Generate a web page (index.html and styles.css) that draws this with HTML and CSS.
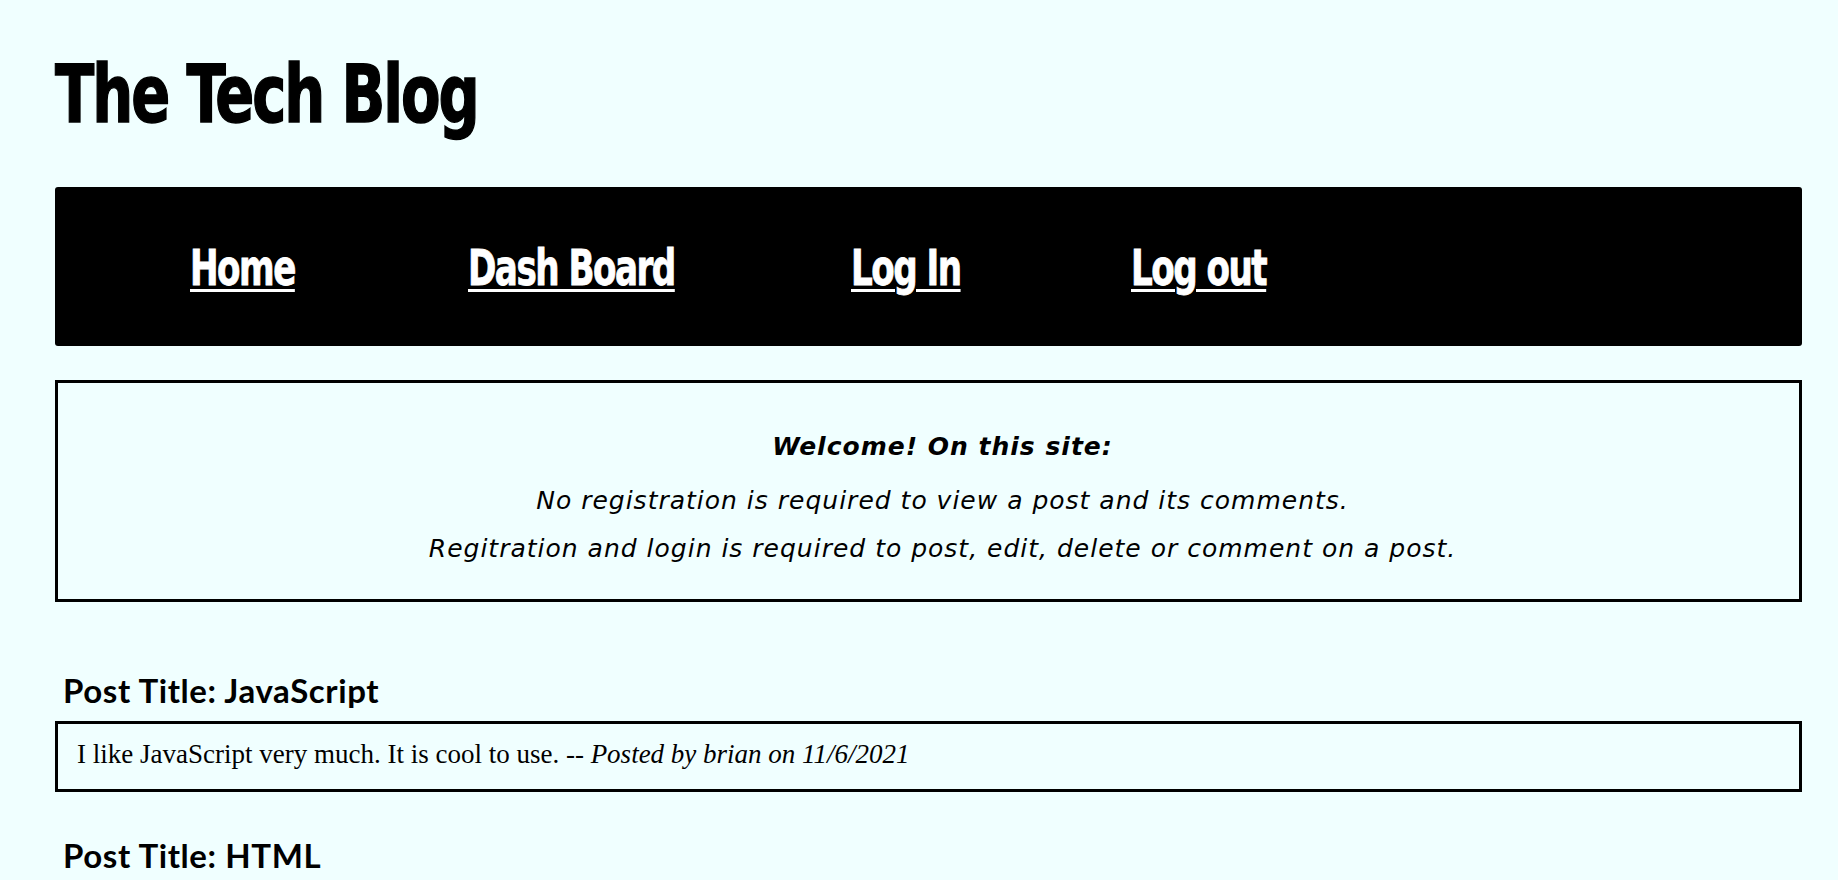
FILE: index.html
```html
<!DOCTYPE html>
<html lang="en">
<head>
<meta charset="utf-8">
<title>The Tech Blog</title>
<link rel="stylesheet" href="styles.css">
</head>
<body>
<div class="page">
  <header class="site-header">
    <h1 class="site-title"><span class="condensed">The Tech Blog</span></h1>
    <nav class="main-nav">
      <a class="nav-link" href="#"><span class="nav-text">Home</span></a>
      <a class="nav-link" href="#"><span class="nav-text">Dash Board</span></a>
      <a class="nav-link" href="#"><span class="nav-text">Log In</span></a>
      <a class="nav-link" href="#"><span class="nav-text">Log out</span></a>
    </nav>
  </header>

  <section class="welcome">
    <p class="welcome-title">Welcome! On this site:</p>
    <p class="welcome-line">No registration is required to view a post and its comments.</p>
    <p class="welcome-line">Regitration and login is required to post, edit, delete or comment on a post.</p>
  </section>

  <main class="posts">
    <article class="post">
      <h2 class="post-title">Post Title: JavaScript</h2>
      <div class="post-body">I like JavaScript very much. It is cool to use. -- <em>Posted by brian on 11/6/2021</em></div>
    </article>
    <article class="post">
      <h2 class="post-title">Post Title: HTML</h2>
      <div class="post-body">HTML is the structure of every web page. -- <em>Posted by brian on 11/6/2021</em></div>
    </article>
  </main>
</div>
</body>
</html>
```

FILE: styles.css
```css
html, body {
  margin: 0;
  padding: 0;
  background: #f0ffff;
  color: #000;
}

.page {
  width: 1747px;
  margin-left: 55px;
}

.site-title {
  margin: 55px 0 52px 0;
  font-family: "DejaVu Sans Condensed", "Liberation Sans", sans-serif;
  font-weight: bold;
  font-size: 80px;
  line-height: 80px;
  letter-spacing: -2.5px;
  white-space: nowrap;
}

.condensed {
  display: inline-block;
  transform: scaleX(0.8);
  transform-origin: left center;
  -webkit-text-stroke: 1.4px #000;
}

.main-nav {
  display: grid;
  grid-template-columns: 105px 210px 107px 131px;
  column-gap: 173px;
  align-items: center;
  height: 159px;
  padding-left: 135px;
  background: #000;
  border-radius: 3px;
}

.nav-link {
  display: block;
  white-space: nowrap;
  color: #fff;
  text-decoration: none;
  font-family: "DejaVu Sans Condensed", "Liberation Sans", sans-serif;
  font-weight: bold;
  font-size: 50px;
  line-height: 50px;
  letter-spacing: -2px;
  padding-top: 3px;
}

.nav-text {
  display: inline-block;
  transform: scaleX(0.76);
  transform-origin: left center;
  text-decoration: underline;
  text-decoration-thickness: 3px;
  text-underline-offset: 4px;
  -webkit-text-stroke: 0.8px #fff;
}

.welcome {
  margin-top: 34px;
  border: 3px solid #000;
  padding: 40px 0 26px 28px;
  text-align: center;
  font-family: "DejaVu Sans", Verdana, sans-serif;
  font-style: italic;
  font-size: 25px;
  letter-spacing: 1px;
  line-height: 48px;
}

.welcome p {
  margin: 0;
}

.welcome .welcome-title {
  font-weight: bold;
  margin-bottom: 6px;
}

.posts {
  padding-top: 25px;
}

.post {
  margin-top: 45px;
}

.post-title {
  margin: 0 0 13px 8px;
  font-family: Lato, "Open Sans", sans-serif;
  font-weight: bold;
  font-size: 33px;
  letter-spacing: 0.6px;
  line-height: 36px;
}

.post-body {
  border: 3px solid #000;
  padding: 15px 19px 19px 19px;
  font-family: "Liberation Serif", "Times New Roman", serif;
  font-size: 27px;
  line-height: 31px;
}
```
